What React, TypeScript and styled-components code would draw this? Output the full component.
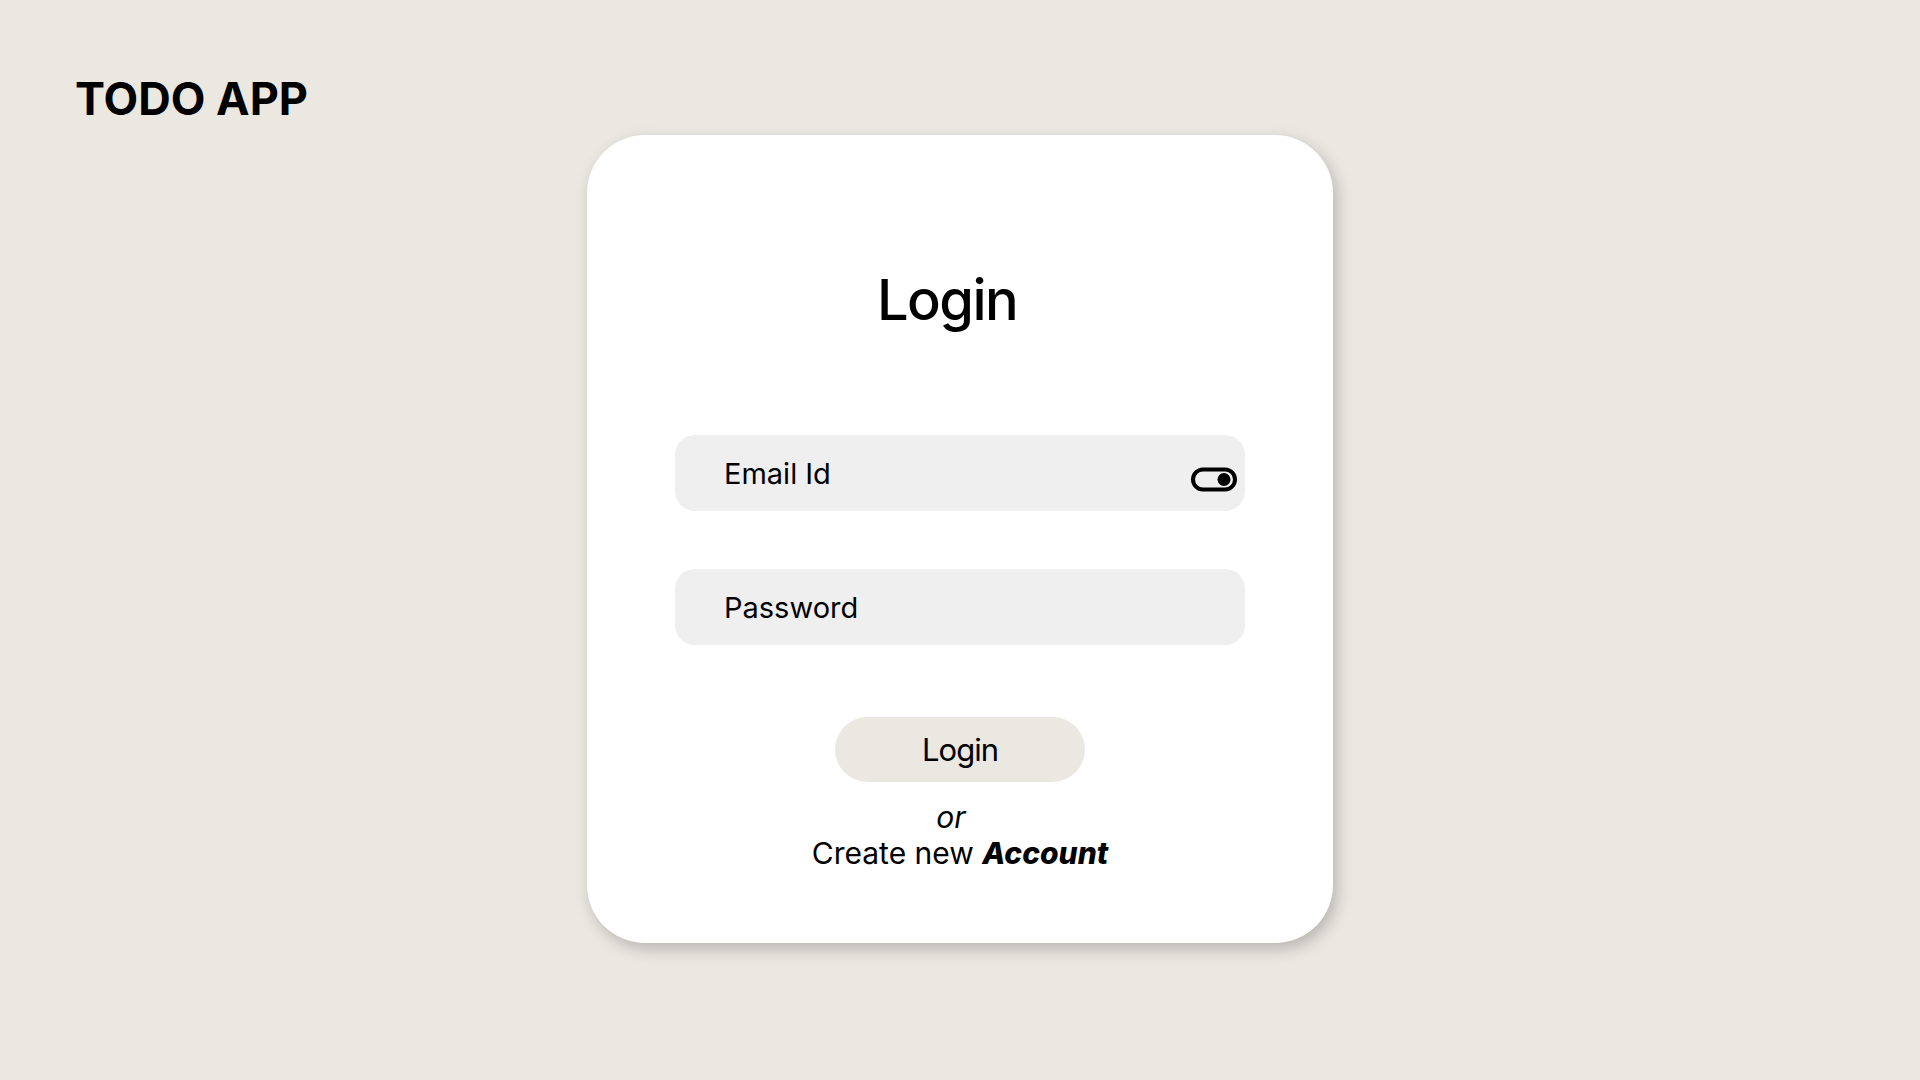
import React from "react";
import styled, { createGlobalStyle } from "styled-components";

const GlobalStyle = createGlobalStyle`
  html, body {
    margin: 0;
    padding: 0;
    background: #ebe8e2;
  }
  body {
    font-family: Inter, "Noto Sans", "Liberation Sans", sans-serif;
    color: #000;
  }
  * { box-sizing: border-box; }
`;

const Page = styled.div`
  min-height: 1080px;
  display: flex;
  flex-direction: column;
  padding: 72px 0 0 75px;
`;

const Brand = styled.h1`
  margin: 0;
  font-size: 45px;
  line-height: 54px;
  font-weight: 700;
  letter-spacing: 0;
`;

const CardRow = styled.div`
  display: flex;
  justify-content: center;
  margin-left: -75px;
  margin-top: 9px;
`;

const Card = styled.form`
  width: 746px;
  height: 808px;
  background: #fff;
  border-radius: 58px;
  box-shadow: 4px 6px 16px rgba(0, 0, 0, 0.22);
  display: flex;
  flex-direction: column;
  align-items: center;
  padding: 131px 88px 72px;
`;

const Title = styled.h2`
  margin: 0 0 101px;
  font-size: 56px;
  line-height: 68px;
  font-weight: 500;
  letter-spacing: -1.6px;
  padding-right: 26px;
`;

const Field = styled.label<{ $gap?: number }>`
  width: 570px;
  height: 76px;
  flex: none;
  background: #efefef;
  border-radius: 20px;
  display: flex;
  align-items: center;
  padding: 0 8px 0 49px;
  margin-bottom: ${(p) => p.$gap ?? 0}px;
`;

const Placeholder = styled.span`
  flex: 1;
  font-size: 29px;
  color: #000;
`;

const ToggleIcon = styled.svg`
  width: 46px;
  height: 25px;
  margin-top: 12px;
  flex: none;
`;

const LoginButton = styled.button`
  width: 250px;
  height: 65px;
  flex: none;
  border: none;
  border-radius: 33px;
  background: #ebe8e2;
  font-family: Inter, "Noto Sans", "Liberation Sans", sans-serif;
  font-size: 31px;
  letter-spacing: -1px;
  color: #000;
  padding: 0;
  margin-bottom: 17px;
  cursor: pointer;
`;

const Or = styled.div`
  font-size: 30px;
  line-height: 36px;
  font-style: italic;
  padding-right: 18px;
`;

const CreateLine = styled.div`
  font-size: 30px;
  line-height: 36px;

  b {
    font-style: italic;
    font-weight: 800;
  }
`;

export default function App() {
  return (
    <>
      <GlobalStyle />
      <Page>
        <Brand>TODO APP</Brand>
        <CardRow>
          <Card onSubmit={(e) => e.preventDefault()}>
            <Title>Login</Title>
            <Field $gap={58}>
              <Placeholder>Email Id</Placeholder>
              <ToggleIcon viewBox="0 0 46 25" fill="none">
                <rect x="2" y="2.5" width="42" height="20" rx="10" stroke="#000" strokeWidth="4" />
                <circle cx="33" cy="12.5" r="6.5" fill="#000" />
              </ToggleIcon>
            </Field>
            <Field $gap={72}>
              <Placeholder>Password</Placeholder>
            </Field>
            <LoginButton type="submit">Login</LoginButton>
            <Or>or</Or>
            <CreateLine>
              Create new <b>Account</b>
            </CreateLine>
          </Card>
        </CardRow>
      </Page>
    </>
  );
}
